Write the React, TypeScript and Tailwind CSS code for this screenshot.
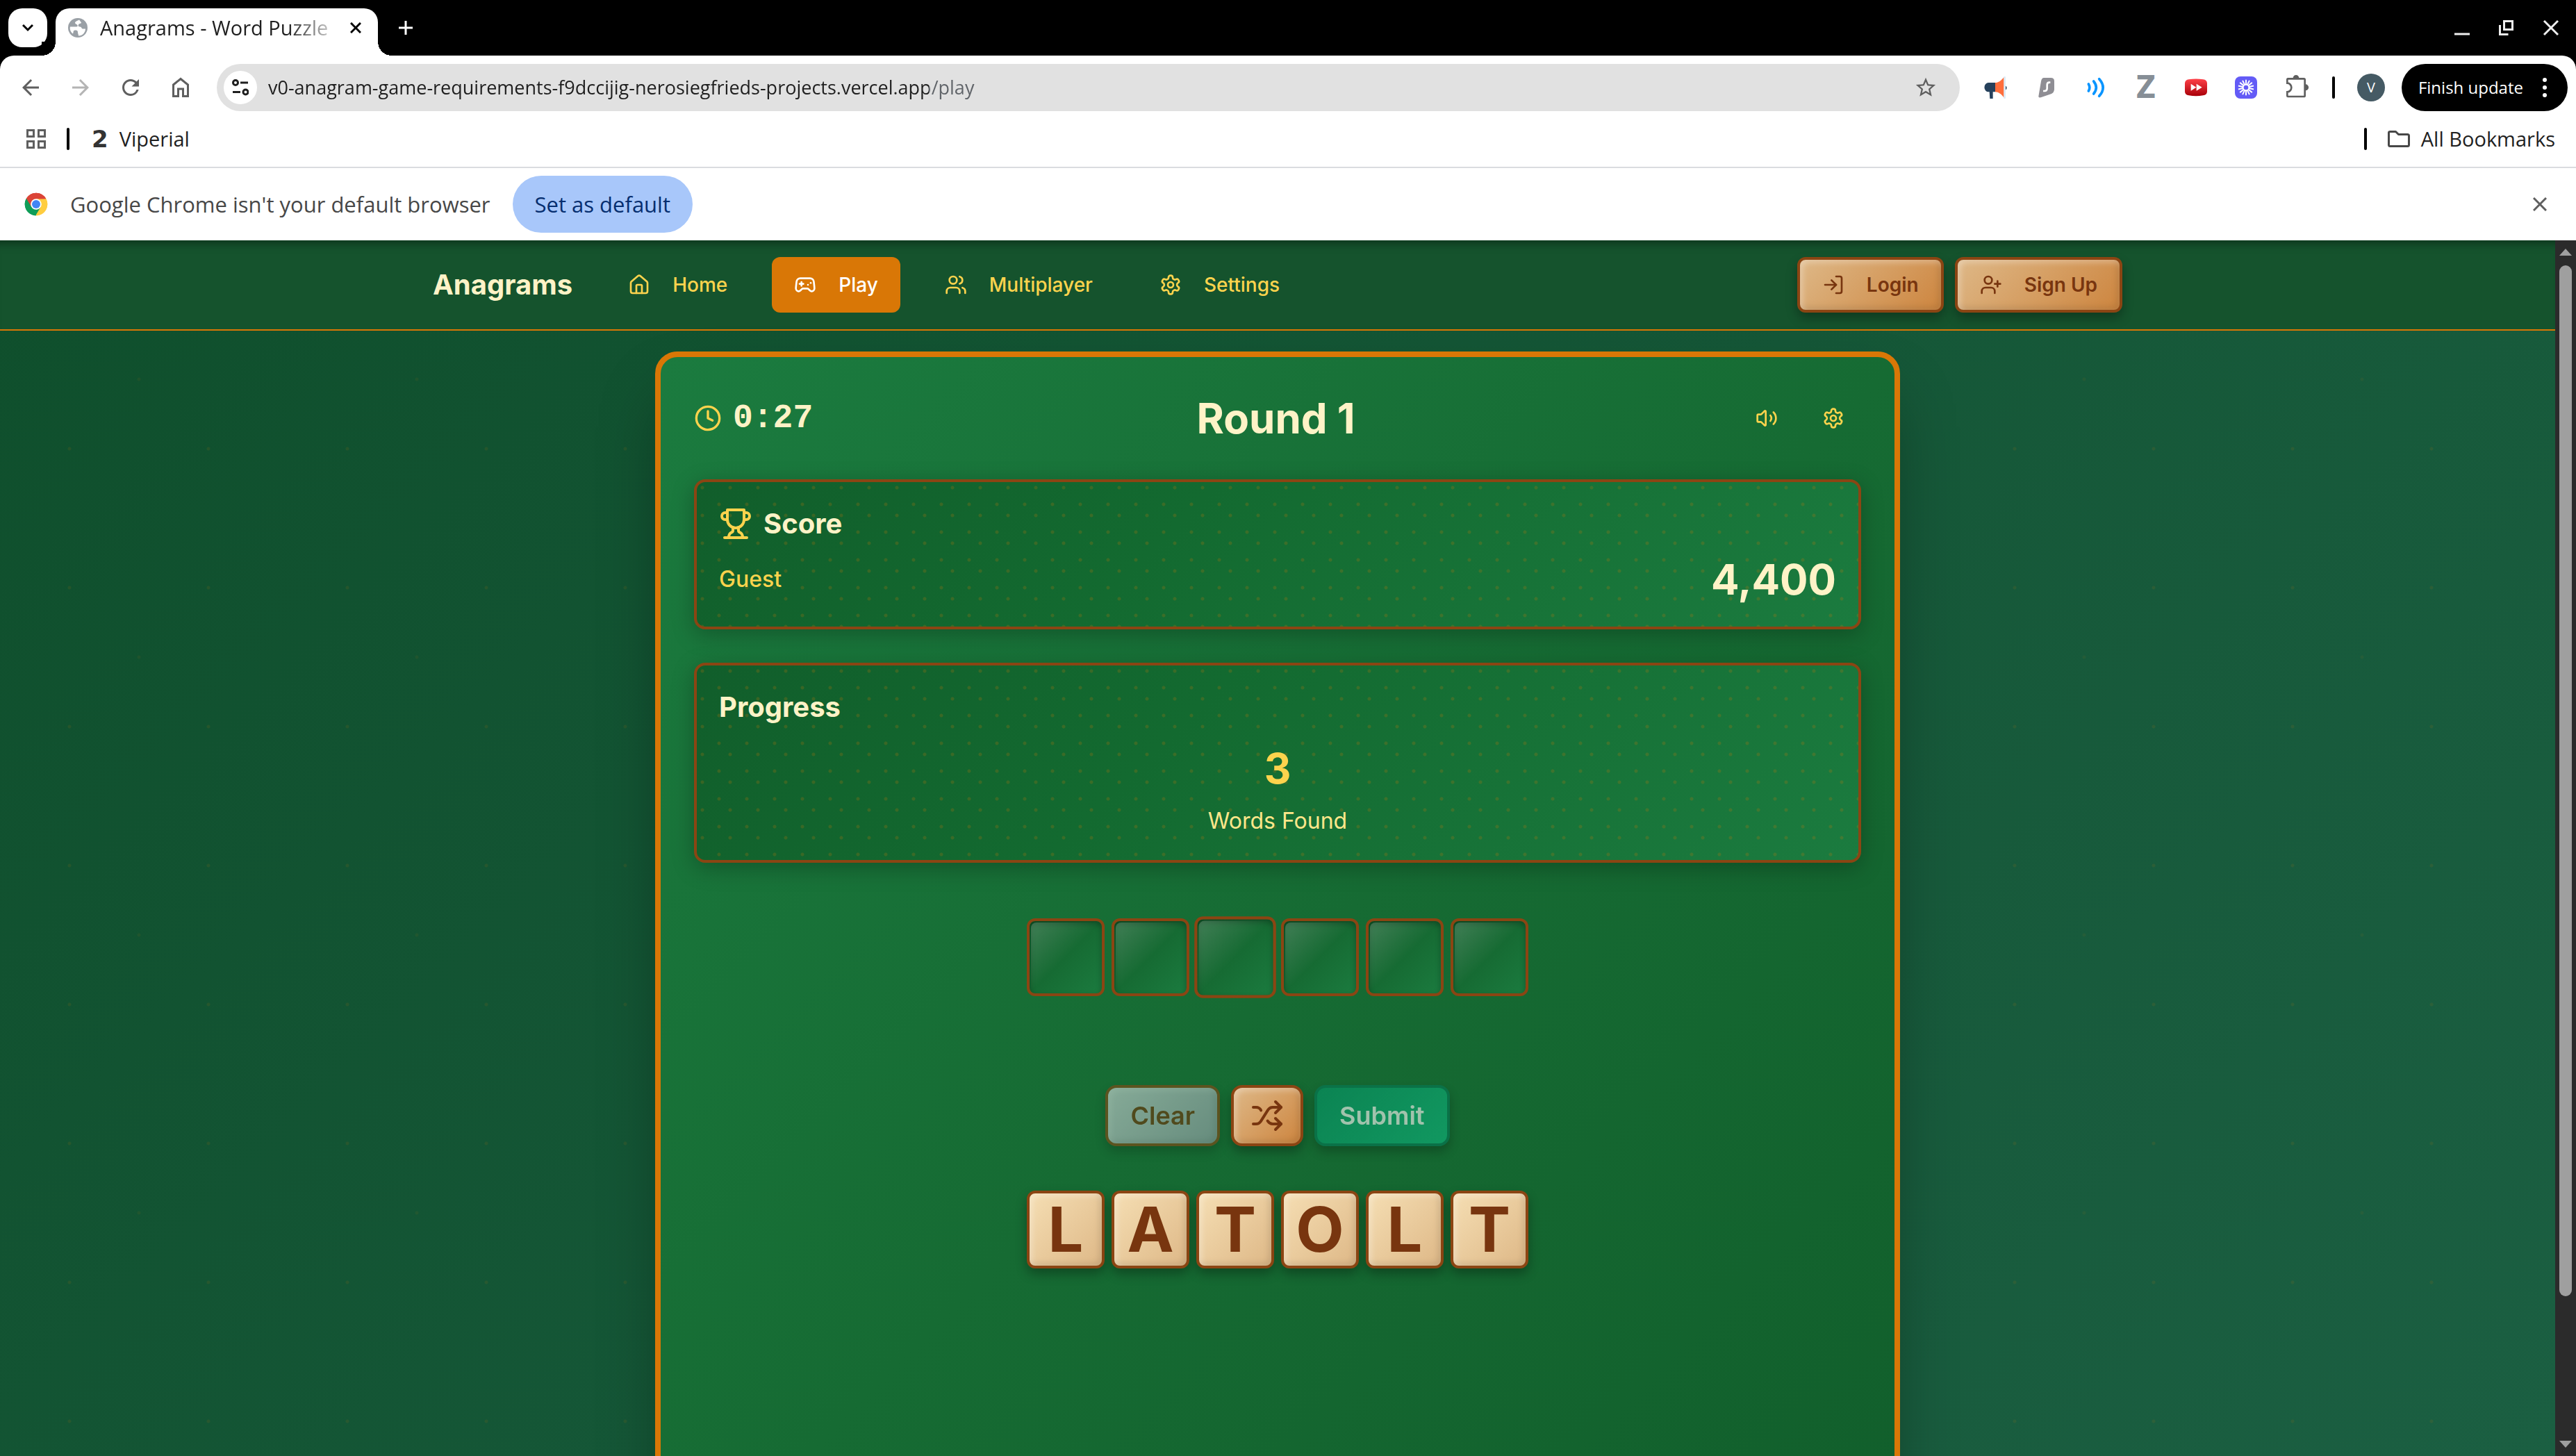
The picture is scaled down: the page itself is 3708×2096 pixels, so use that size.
import React from 'react';
import { Clock, Gamepad2, House, LogIn, Shuffle, UserPlus, Users, Volume2 } from 'lucide-react';
import { MdArrowBack, MdArrowForward, MdRefresh, MdStarOutline } from 'react-icons/md';

type IconProps = { className?: string };

function GearIcon({ className }: IconProps) {
  return (
    <svg viewBox="0 0 24 24" fill="none" stroke="currentColor" strokeWidth="2" strokeLinecap="round" strokeLinejoin="round" className={className}>
      <path d="M12.22 2h-.44a2 2 0 0 0-2 2v.18a2 2 0 0 1-1 1.73l-.43.25a2 2 0 0 1-2 0l-.15-.08a2 2 0 0 0-2.73.73l-.22.38a2 2 0 0 0 .73 2.73l.15.1a2 2 0 0 1 1 1.72v.51a2 2 0 0 1-1 1.74l-.15.09a2 2 0 0 0-.73 2.73l.22.38a2 2 0 0 0 2.73.73l.15-.08a2 2 0 0 1 2 0l.43.25a2 2 0 0 1 1 1.73V20a2 2 0 0 0 2 2h.44a2 2 0 0 0 2-2v-.18a2 2 0 0 1 1-1.73l.43-.25a2 2 0 0 1 2 0l.15.08a2 2 0 0 0 2.73-.73l.22-.39a2 2 0 0 0-.73-2.73l-.15-.08a2 2 0 0 1-1-1.74v-.5a2 2 0 0 1 1-1.74l.15-.09a2 2 0 0 0 .73-2.73l-.22-.38a2 2 0 0 0-2.73-.73l-.15.08a2 2 0 0 1-2 0l-.43-.25a2 2 0 0 1-1-1.73V4a2 2 0 0 0-2-2z" />
      <circle cx="12" cy="12" r="3" />
    </svg>
  );
}

function TrophyIcon({ className }: IconProps) {
  return (
    <svg viewBox="0 0 24 24" fill="none" stroke="currentColor" strokeWidth="2" strokeLinecap="round" strokeLinejoin="round" className={className}>
      <path d="M6 9H4.5a2.5 2.5 0 0 1 0-5H6" />
      <path d="M18 9h1.5a2.5 2.5 0 0 0 0-5H18" />
      <path d="M4 22h16" />
      <path d="M10 14.66V17c0 .55-.47.98-.97 1.21C7.85 18.75 7 20.24 7 22" />
      <path d="M14 14.66V17c0 .55.47.98.97 1.21C16.15 18.75 17 20.24 17 22" />
      <path d="M18 2H6v7a6 6 0 0 0 12 0V2Z" />
    </svg>
  );
}

function ChromeLogo() {
  return (
    <svg viewBox="0 0 48 48" className="size-[34px]">
      <path d="M24 24 4.1 12.5A23 23 0 0 1 43.9 12.5Z" fill="#db4437" />
      <path d="M24 24 43.9 12.5A23 23 0 0 1 24 47Z" fill="#ffcd40" />
      <path d="M24 24 24 47A23 23 0 0 1 4.1 12.5Z" fill="#0f9d58" />
      <path d="M24 13H44.2a23 23 0 0 1-20.2 34L33.5 29.5Z" fill="#ffcd40" />
      <path d="M4.1 12.5 14.5 29.5 24 35 33 30 23 47A23 23 0 0 1 4.1 12.5Z" fill="#0f9d58" />
      <path d="M4.1 12.5A23 23 0 0 1 44.2 13H24L14 19 14.5 29.5Z" fill="#db4437" />
      <circle cx="24" cy="24" r="11" fill="#fff" />
      <circle cx="24" cy="24" r="8.5" fill="#4285f4" />
    </svg>
  );
}

/* Extension icons in the browser toolbar */
function Extensions() {
  const icon = 'size-8 overflow-visible';
  return (
    <div className="flex items-center gap-10 ml-9">
      <button aria-label="Announcements">
        <svg viewBox="54 60 96 96" className={icon}>
          <path d="M99 87H70a16 18 0 0 0 0 40h4l2 29h13v-29h10Z" fill="#26415c" />
          <path d="M99 87c14 0 26-9 38-25v90c-12-16-24-25-38-25Z" fill="#ff6e3c" />
          <path d="M136 62q0-2 4-2t4 2v92q0 2-4 2t-4-2Z" fill="#dcecf8" />
          <path d="M144 101a7 9 0 0 1 0 17Z" fill="#26415c" />
        </svg>
      </button>
      <button aria-label="VPN">
        <svg viewBox="270 60 96 96" className={icon}>
          <path d="M309 66h30q15 0 15 14v35q0 14-12 20l-44 15q-12 4-12-4l11-65q3-15 12-15Z" fill="#8f8e94" />
          <path d="M337 86h-4q-10 0-10 10v16q0 11-11 11h-6" fill="none" stroke="#fff" strokeWidth="8" />
        </svg>
      </button>
      <button aria-label="Sound">
        <svg viewBox="485 60 96 96" fill="none" stroke="#0a95ff" strokeWidth="11" strokeLinecap="round" className={icon}>
          <path d="M501 93q9 15 0 30M523 81q22 27 0 54M547 71q33 37 0 74" />
        </svg>
      </button>
      <button aria-label="Reader" className="flex size-8 items-center justify-center font-['DejaVu_Sans_Condensed','DejaVu_Sans',sans-serif] font-bold text-[44px] leading-8 text-[#868e96]">
        Z
      </button>
      <button aria-label="Skip ahead">
        <svg viewBox="918 60 96 96" className={icon}>
          <defs>
            <linearGradient id="skip" x1="0" y1="0" x2="0" y2="1">
              <stop offset="0" stopColor="#ff4048" />
              <stop offset="1" stopColor="#a80008" />
            </linearGradient>
          </defs>
          <path d="M935 73q31-5 62 0 16 2 17 16v37q-1 14-17 16-31 6-62 0-16-2-17-16V89q1-14 17-16Z" fill="url(#skip)" />
          <path d="M944 92l23 15-23 15ZM968 92l24 15-24 15Z" fill="#fff" />
        </svg>
      </button>
      <button aria-label="Burst">
        <svg viewBox="-48 -48 96 96" className={icon}>
          <rect x="-48" y="-48" width="96" height="96" rx="24" fill="#635bf6" />
          <circle r="13" fill="none" stroke="#fff" strokeWidth="6" />
          {[0, 26, 51, 77, 103, 129, 154, 180, 206, 231, 257, 283, 309, 334].map((angle) => (
            <path key={angle} d="M0-14V-34" stroke="#fff" strokeWidth="6" transform={`rotate(${angle})`} />
          ))}
        </svg>
      </button>
      <button aria-label="Extensions">
        <svg viewBox="1350 60 96 96" className={icon}>
          <path d="M1363 70H1432q4 0 4 4V144q0 3-4 3H1363q-3 0-3-3V127a18 19 0 0 0 0-38V74q0-4 3-4Z" fill="none" stroke="#5f5f5f" strokeWidth="8" />
          <path d="M1385 67a13 13 0 0 1 26 0ZM1439 94a13 13 0 0 1 0 27Z" fill="#5f5f5f" />
        </svg>
      </button>
    </div>
  );
}

function TabStrip() {
  return (
    <div className="flex h-20 bg-black pt-3">
      <button aria-label="Search tabs" className="ml-3 flex size-14 items-center justify-center rounded-[20px] bg-white">
        <svg viewBox="0 0 16 16" className="size-4" fill="none" stroke="#000" strokeWidth="3">
          <path d="M1 4l7 7 7-7" />
        </svg>
      </button>
      <div className="relative ml-3 flex w-[464px] items-center rounded-t-[20px] bg-white pl-[18px] pr-4 pb-3">
        <span className="absolute bottom-0 -left-5 size-5 bg-[radial-gradient(circle_at_0_0,#000_20px,#fff_20px)]" />
        <span className="absolute bottom-0 -right-5 size-5 bg-[radial-gradient(circle_at_100%_0,#000_20px,#fff_20px)]" />
        <svg viewBox="0 0 28 28" className="size-7 shrink-0">
          <circle cx="14" cy="14" r="14" fill="#9aa0a6" />
          <path d="M16 2.500c-1 1-5 1.500-6 4 0 2 2 2 3 3s1 3-1 3H3c-1 4 1 8 4 10 1-2 0-5 3-5 2 0 4 0 4 3 0 2 1 3 1 5 6 0 10-5 10-10h-4c-2 0-1-3-4-3-2 0-3-1-2-3 0-2 4-1 4-3Z" fill="#fff" />
        </svg>
        <span className="ml-[18px] flex-1 whitespace-nowrap text-[29px] leading-9 text-[#1f1f1f] [mask-image:linear-gradient(90deg,#000_270px,transparent_350px)]">
          Anagrams - Word Puzzle
        </span>
        <button aria-label="Close tab" className="ml-4 flex size-8 shrink-0 items-center justify-center">
          <svg viewBox="0 0 16 16" className="size-4" stroke="#000" strokeWidth="3">
            <path d="M1 1l14 14M15 1L1 15" />
          </svg>
        </button>
      </div>
      <button aria-label="New tab" className="ml-[22px] flex h-14 w-9 items-center justify-center">
        <svg viewBox="0 0 20 20" className="size-5" stroke="#fff" strokeWidth="3">
          <path d="M10 0v20M0 10h20" />
        </svg>
      </button>
      <div className="ml-auto flex h-14 items-center gap-8 pr-5">
        <button aria-label="Minimize" className="flex size-8 items-center justify-center">
          <svg viewBox="0 0 24 24" className="size-6" stroke="#eee" strokeWidth="3">
            <path d="M1 21h22" />
          </svg>
        </button>
        <button aria-label="Restore" className="flex size-8 items-center justify-center">
          <svg viewBox="0 0 24 24" className="size-6" fill="none" stroke="#eee" strokeWidth="3">
            <path d="M8.500 2.500h12v12h-12zM2.500 8v13.500h12" />
          </svg>
        </button>
        <button aria-label="Close window" className="flex size-8 items-center justify-center">
          <svg viewBox="0 0 24 24" className="size-6" stroke="#eee" strokeWidth="3">
            <path d="M2 2l20 20M22 2L2 22" />
          </svg>
        </button>
      </div>
    </div>
  );
}

function BrowserChrome() {
  return (
    <header className="shrink-0 bg-black font-['Open_Sans',sans-serif]">
      <TabStrip />
      <div className="rounded-t-[20px] bg-white">
        {/* Toolbar */}
        <div className="flex items-center pt-3">
          <div className="flex items-center gap-9 pl-[26px] text-[36px] text-[#5f5f5f]">
            <button aria-label="Back"><MdArrowBack /></button>
            <button aria-label="Forward" className="text-[#b4b4b4]"><MdArrowForward /></button>
            <button aria-label="Reload"><MdRefresh /></button>
            <button aria-label="Home">
              <svg viewBox="0 0 36 36" className="size-9" fill="none" stroke="currentColor" strokeWidth="3">
                <path d="M7.500 14 18 5.500 28.500 14v16.500h-7V20h-7v10.500h-7Z" />
              </svg>
            </button>
          </div>
          <div className="ml-[34px] flex h-[68px] flex-1 items-center rounded-full bg-[#e1e1e1] pl-[10px] pr-8">
            <button aria-label="Site information" className="flex size-12 shrink-0 items-center justify-center rounded-full bg-white">
              <svg viewBox="0 0 24 24" className="size-6" fill="none" stroke="#1f1f1f" strokeWidth="3">
                <circle cx="5" cy="5" r="3.500" />
                <path d="M12 5h11M1 18.500h11" />
                <circle cx="19.500" cy="18.500" r="3.500" />
              </svg>
            </button>
            <input
              aria-label="Address"
              readOnly
              value="v0-anagram-game-requirements-f9dccijig-nerosiegfrieds-projects.vercel.app/play"
              className="ml-4 min-w-0 flex-1 bg-[linear-gradient(90deg,#1f1f1f_951px,#5f6368_951px)] bg-clip-text text-[27px] leading-10 text-transparent outline-none"
            />
            <button aria-label="Bookmark this page" className="text-[34px] text-[#5f5f5f]"><MdStarOutline /></button>
          </div>
          <Extensions />
          <div className="ml-9 h-8 w-1 rounded-full bg-black" />
          <button aria-label="Profile" className="ml-8 flex size-10 items-center justify-center rounded-full bg-[#455a64] text-xl text-white">V</button>
          <button className="ml-6 mr-3 flex h-[68px] items-center rounded-full bg-black pl-6 pr-[30px] text-2xl whitespace-nowrap text-white">
            Finish update
            <svg viewBox="0 0 6 28" className="ml-7 h-7 w-[6px]" fill="#fff">
              <circle cx="3" cy="3" r="3" />
              <circle cx="3" cy="14" r="3" />
              <circle cx="3" cy="25" r="3" />
            </svg>
          </button>
        </div>

        {/* Bookmarks bar */}
        <div className="flex h-20 items-center px-[38px] pr-[30px] text-[29px] text-[#1f1f1f]">
          <button aria-label="Apps">
            <svg viewBox="0 0 28 28" className="size-7" fill="none" stroke="#5f5f5f" strokeWidth="3">
              <path d="M1.500 1.500h9v9h-9zM17.500 1.500h9v9h-9zM1.500 17.500h9v9h-9zM17.500 17.500h9v9h-9z" />
            </svg>
          </button>
          <div className="ml-[30px] h-8 w-1 rounded-full bg-black" />
          <a href="#viperial" className="ml-8 flex items-center gap-4">
            <span className="font-['DejaVu_Sans',sans-serif] text-[34px] leading-8 font-bold text-[#333]">2</span>
            Viperial
          </a>
          <div className="ml-auto h-8 w-1 rounded-full bg-black" />
          <button className="ml-[30px] flex items-center gap-4">
            <svg viewBox="0 0 32 24" className="h-6 w-8" fill="none" stroke="#474747" strokeWidth="3" strokeLinejoin="round">
              <path d="M1.500 3q0-1.500 2-1.500h8l4 4h13q2 0 2 2v13q0 2-2 2h-25q-2 0-2-2Z" />
            </svg>
            All Bookmarks
          </button>
        </div>

        {/* Default browser prompt */}
        <div className="flex h-[106px] items-center border-t-2 border-[#dadce0] pl-[35px] pr-10">
          <ChromeLogo />
          <p className="ml-8 text-[31px] text-[#474747]">Google Chrome isn't your default browser</p>
          <button className="ml-8 h-[82px] rounded-full bg-[#a8c7fa] px-8 text-[31px] font-medium whitespace-nowrap text-[#062e6f]">Set as default</button>
          <button aria-label="Dismiss" className="ml-auto flex size-6 items-center justify-center">
            <svg viewBox="0 0 20 20" className="size-5" stroke="#5f5f5f" strokeWidth="3">
              <path d="M1 1l18 18M19 1L1 19" />
            </svg>
          </button>
        </div>
      </div>
    </header>
  );
}

const woodButton =
  'border-4 border-[#8b4513] bg-[linear-gradient(135deg,#deb887_0%,#cd853f_100%)] text-[#78350f] shadow-[0_8px_16px_rgba(0,0,0,0.3),inset_4px_4px_8px_rgba(255,255,255,0.3),inset_-4px_-4px_8px_rgba(0,0,0,0.1)]';

function Navbar() {
  const links = [
    { label: 'Home', icon: House, className: 'text-[#fcd34d]' },
    { label: 'Play', icon: Gamepad2, className: 'bg-[#d97706] text-white' },
    { label: 'Multiplayer', icon: Users, className: 'text-[#fcd34d]' },
    { label: 'Settings', icon: GearIcon, className: 'text-[#fcd34d]' }
  ];

  return (
    <nav className="h-[130px] border-b-2 border-[#d97706] bg-[#15532d] shadow-[inset_0_16px_14px_-12px_rgba(0,0,0,0.4)]">
      <div className="mx-auto flex h-full max-w-[2560px] items-center px-16">
        <a href="#home" className="text-[40px] font-bold text-[#fef3c7]">Anagrams</a>
        <div className="ml-12 flex items-center gap-8">
          {links.map(({ label, icon: Icon, className }) => (
            <a key={label} href={`#${label.toLowerCase()}`} className={`flex h-20 items-center gap-8 rounded-xl px-8 text-[28px] font-medium ${className}`}>
              <Icon className="size-8" />
              {label}
            </a>
          ))}
        </div>
        <div className="ml-auto flex items-center gap-4">
          <button className={`flex h-20 items-center gap-8 rounded-xl px-8 text-[28px] font-semibold ${woodButton}`}>
            <LogIn className="size-8" />
            Login
          </button>
          <button className={`flex h-20 items-center gap-8 rounded-xl px-8 text-[28px] font-semibold ${woodButton}`}>
            <UserPlus className="size-8" />
            Sign Up
          </button>
        </div>
      </div>
    </nav>
  );
}

function Panel({ children }: { children: React.ReactNode }) {
  return (
    <section className="mb-12 rounded-2xl border-4 border-[#8b4513] bg-[radial-gradient(circle_at_20%_20%,rgba(217,119,6,0.2)_2px,transparent_3px),radial-gradient(circle_at_80%_80%,rgba(217,119,6,0.2)_2px,transparent_3px),linear-gradient(135deg,#115e2b_0%,#136a30_40%,#1b7b3f_100%)] bg-size-[40px_40px,40px_40px,100%_100%] p-8 shadow-[0_8px_32px_rgba(0,0,0,0.25)]">
      {children}
    </section>
  );
}

function GameBoard() {
  const slots = [0, 1, 2, 3, 4, 5];
  const hoveredSlot = 2;
  const letters = ['L', 'A', 'T', 'O', 'L', 'T'];

  return (
    <div className="mx-auto min-h-[1816px] w-full max-w-[1792px] rounded-[32px] border-8 border-[#d97706] bg-[linear-gradient(135deg,#1b7b3f_0%,#166b33_50%,#115e2b_100%)] p-12 shadow-[0_50px_100px_-24px_rgba(0,0,0,0.4)]">
      <div className="mb-12 flex h-20 items-center justify-between">
        <div className="flex items-center gap-4">
          <Clock className="size-10 text-[#fcd34d]" />
          <span className="font-['Liberation_Mono',monospace] text-5xl font-bold text-[#fef3c7]">0:27</span>
        </div>
        <h1 className="text-[60px] leading-[72px] font-bold text-[#fef3c7]">Round 1</h1>
        <div className="flex items-center gap-4 text-[#fcd34d]">
          <button aria-label="Sound" className="px-6"><Volume2 className="size-8" /></button>
          <button aria-label="Game settings" className="px-6"><GearIcon className="size-8" /></button>
        </div>
      </div>

      <Panel>
        <div className="mb-4 flex items-center gap-4">
          <TrophyIcon className="size-12 text-[#fcd34d]" />
          <h2 className="text-[40px] leading-14 font-bold text-[#fef3c7]">Score</h2>
        </div>
        <div className="flex items-center justify-between">
          <span className="text-[32px] font-medium text-[#fcd34d]">Guest</span>
          <span className="text-[60px] leading-[72px] font-bold text-[#fef3c7]">4,400</span>
        </div>
      </Panel>

      <Panel>
        <h2 className="mb-6 text-[40px] leading-14 font-bold text-[#fef3c7]">Progress</h2>
        <div className="text-center">
          <div className="text-[60px] leading-[72px] font-bold text-[#fcd34d]">3</div>
          <div className="mt-4 text-[32px] leading-12 text-[#fde68a]">Words Found</div>
        </div>
      </Panel>

      {/* Answer slots */}
      <div className="mt-20 flex justify-center gap-[10px]">
        {slots.map((slot) => (
          <div
            key={slot}
            className={`relative size-28 rounded-xl border-4 border-[#8b4513] bg-[linear-gradient(135deg,#115e2b_0%,#166b33_50%,#1b7b3f_100%)] shadow-[inset_0_4px_8px_rgba(0,0,0,0.3)] before:absolute before:inset-[2px] before:rounded-lg before:bg-[linear-gradient(135deg,rgba(255,255,255,0.2)_0%,transparent_50%)] ${slot === hoveredSlot ? 'scale-105' : ''}`}
          />
        ))}
      </div>

      <div className="mt-32 flex justify-center gap-4">
        <button disabled className="h-[88px] rounded-2xl border-4 border-[#8b4513] bg-[linear-gradient(135deg,#d1d5db_0%,#9ca3af_100%)] px-8 text-4xl font-semibold text-[#78350f] opacity-60 shadow-[0_8px_16px_rgba(0,0,0,0.3),inset_4px_4px_8px_rgba(255,255,255,0.3),inset_-4px_-4px_8px_rgba(0,0,0,0.1)]">
          Clear
        </button>
        <button aria-label="Shuffle letters" className={`h-[88px] rounded-2xl px-6 ${woodButton}`}>
          <Shuffle className="size-12" />
        </button>
        <button disabled className="h-[88px] rounded-2xl border-4 border-[#047857] bg-[linear-gradient(135deg,#059669_0%,#10b981_100%)] px-8 text-4xl font-semibold text-white opacity-60 shadow-[0_8px_16px_rgba(0,0,0,0.4)]">
          Submit
        </button>
      </div>

      {/* Letter tiles */}
      <div className="mt-16 flex justify-center gap-[10px]">
        {letters.map((letter, index) => (
          <button
            key={index}
            className="size-28 rounded-xl border-4 border-[#8b4513] bg-[linear-gradient(135deg,#f5deb3_0%,#deb887_100%)] text-[90px] leading-none font-bold text-[#78350f] shadow-[0_8px_16px_rgba(0,0,0,0.3),inset_4px_4px_8px_rgba(255,255,255,0.3),inset_-4px_-4px_8px_rgba(0,0,0,0.1)]"
          >
            {letter}
          </button>
        ))}
      </div>
    </div>
  );
}

function Scrollbar() {
  return (
    <div className="flex w-[30px] shrink-0 flex-col items-center bg-[#2b2b2b] py-3">
      <svg viewBox="0 0 18 10" className="h-[10px] w-[18px]" fill="#9f9f9f">
        <path d="M9 0l9 10H0z" />
      </svg>
      <div className="mt-[14px] h-[86%] w-[18px] rounded-full bg-[#9f9f9f]" />
      <svg viewBox="0 0 18 10" className="mt-auto h-[10px] w-[18px]" fill="#9f9f9f">
        <path d="M9 10l9-10H0z" />
      </svg>
    </div>
  );
}

export default function App() {
  return (
    <div className="flex h-screen flex-col overflow-hidden font-['Inter',sans-serif]">
      <BrowserChrome />
      <div className="flex min-h-0 flex-1">
        <div className="flex-1 overflow-hidden bg-[radial-gradient(circle_at_50%_50%,rgba(217,119,6,0.1)_2px,transparent_3px),radial-gradient(circle_at_50%_50%,rgba(217,119,6,0.07)_2px,transparent_3px),linear-gradient(135deg,#0f4f2c_0%,#1b5f42_100%)] bg-size-[200px_200px,400px_400px,100%_100%]">
          <Navbar />
          <main className="pt-[30px]">
            <GameBoard />
          </main>
        </div>
        <Scrollbar />
      </div>
    </div>
  );
}
